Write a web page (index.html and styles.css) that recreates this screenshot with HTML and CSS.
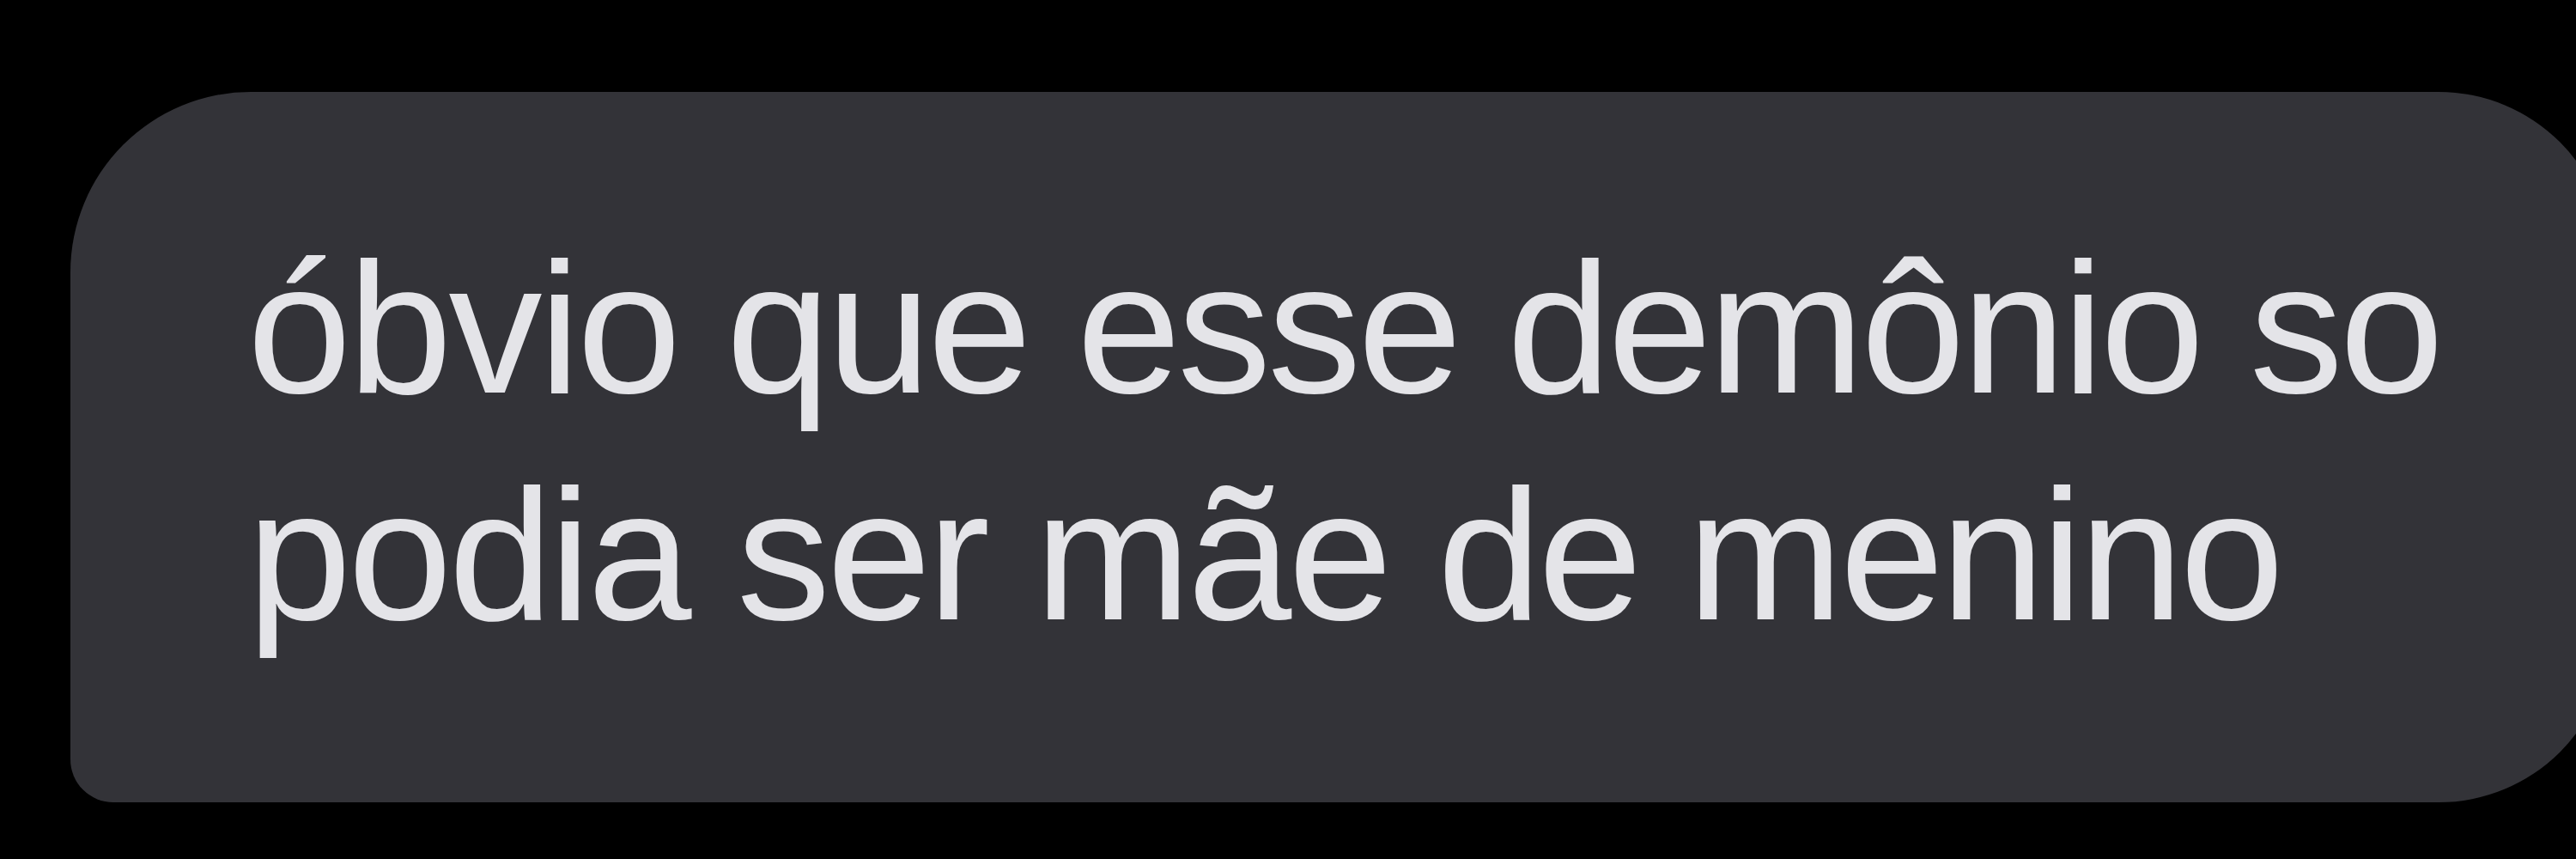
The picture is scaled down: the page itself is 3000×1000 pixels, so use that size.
FILE: index.html
```html
<!DOCTYPE html>
<html lang="pt-BR">
<head>
    <meta charset="UTF-8">
    <meta name="viewport" content="width=device-width, initial-scale=1.0">
    <title>Mensagem</title>
    <link rel="stylesheet" href="styles.css">
</head>
<body>
    <div class="thread">
        <div class="bubble">
            <p class="message">óbvio que esse demônio so<br>podia ser mãe de menino</p>
        </div>
    </div>
</body>
</html>
```

FILE: styles.css
```css
body {
    margin: 0;
    background-color: #000;
    overflow: hidden;
    font-family: "Liberation Sans", Arial, sans-serif;
}
.thread {
    padding: 107px 0 0 82px;
    width: 3000px;
    height: 1000px;
    box-sizing: border-box;
}
.bubble {
    width: 2958px;
    box-sizing: border-box;
    padding: 143px 0 156px 206px;
    background-color: #333338;
    border-radius: 210px 200px 200px 50px; /* bottom left: where the tail sits */
}
.message {
    margin: 0;
    color: #e4e4e8;
    font-size: 218px;
    line-height: 264px;
    letter-spacing: -4px;
    white-space: nowrap;
}
```
